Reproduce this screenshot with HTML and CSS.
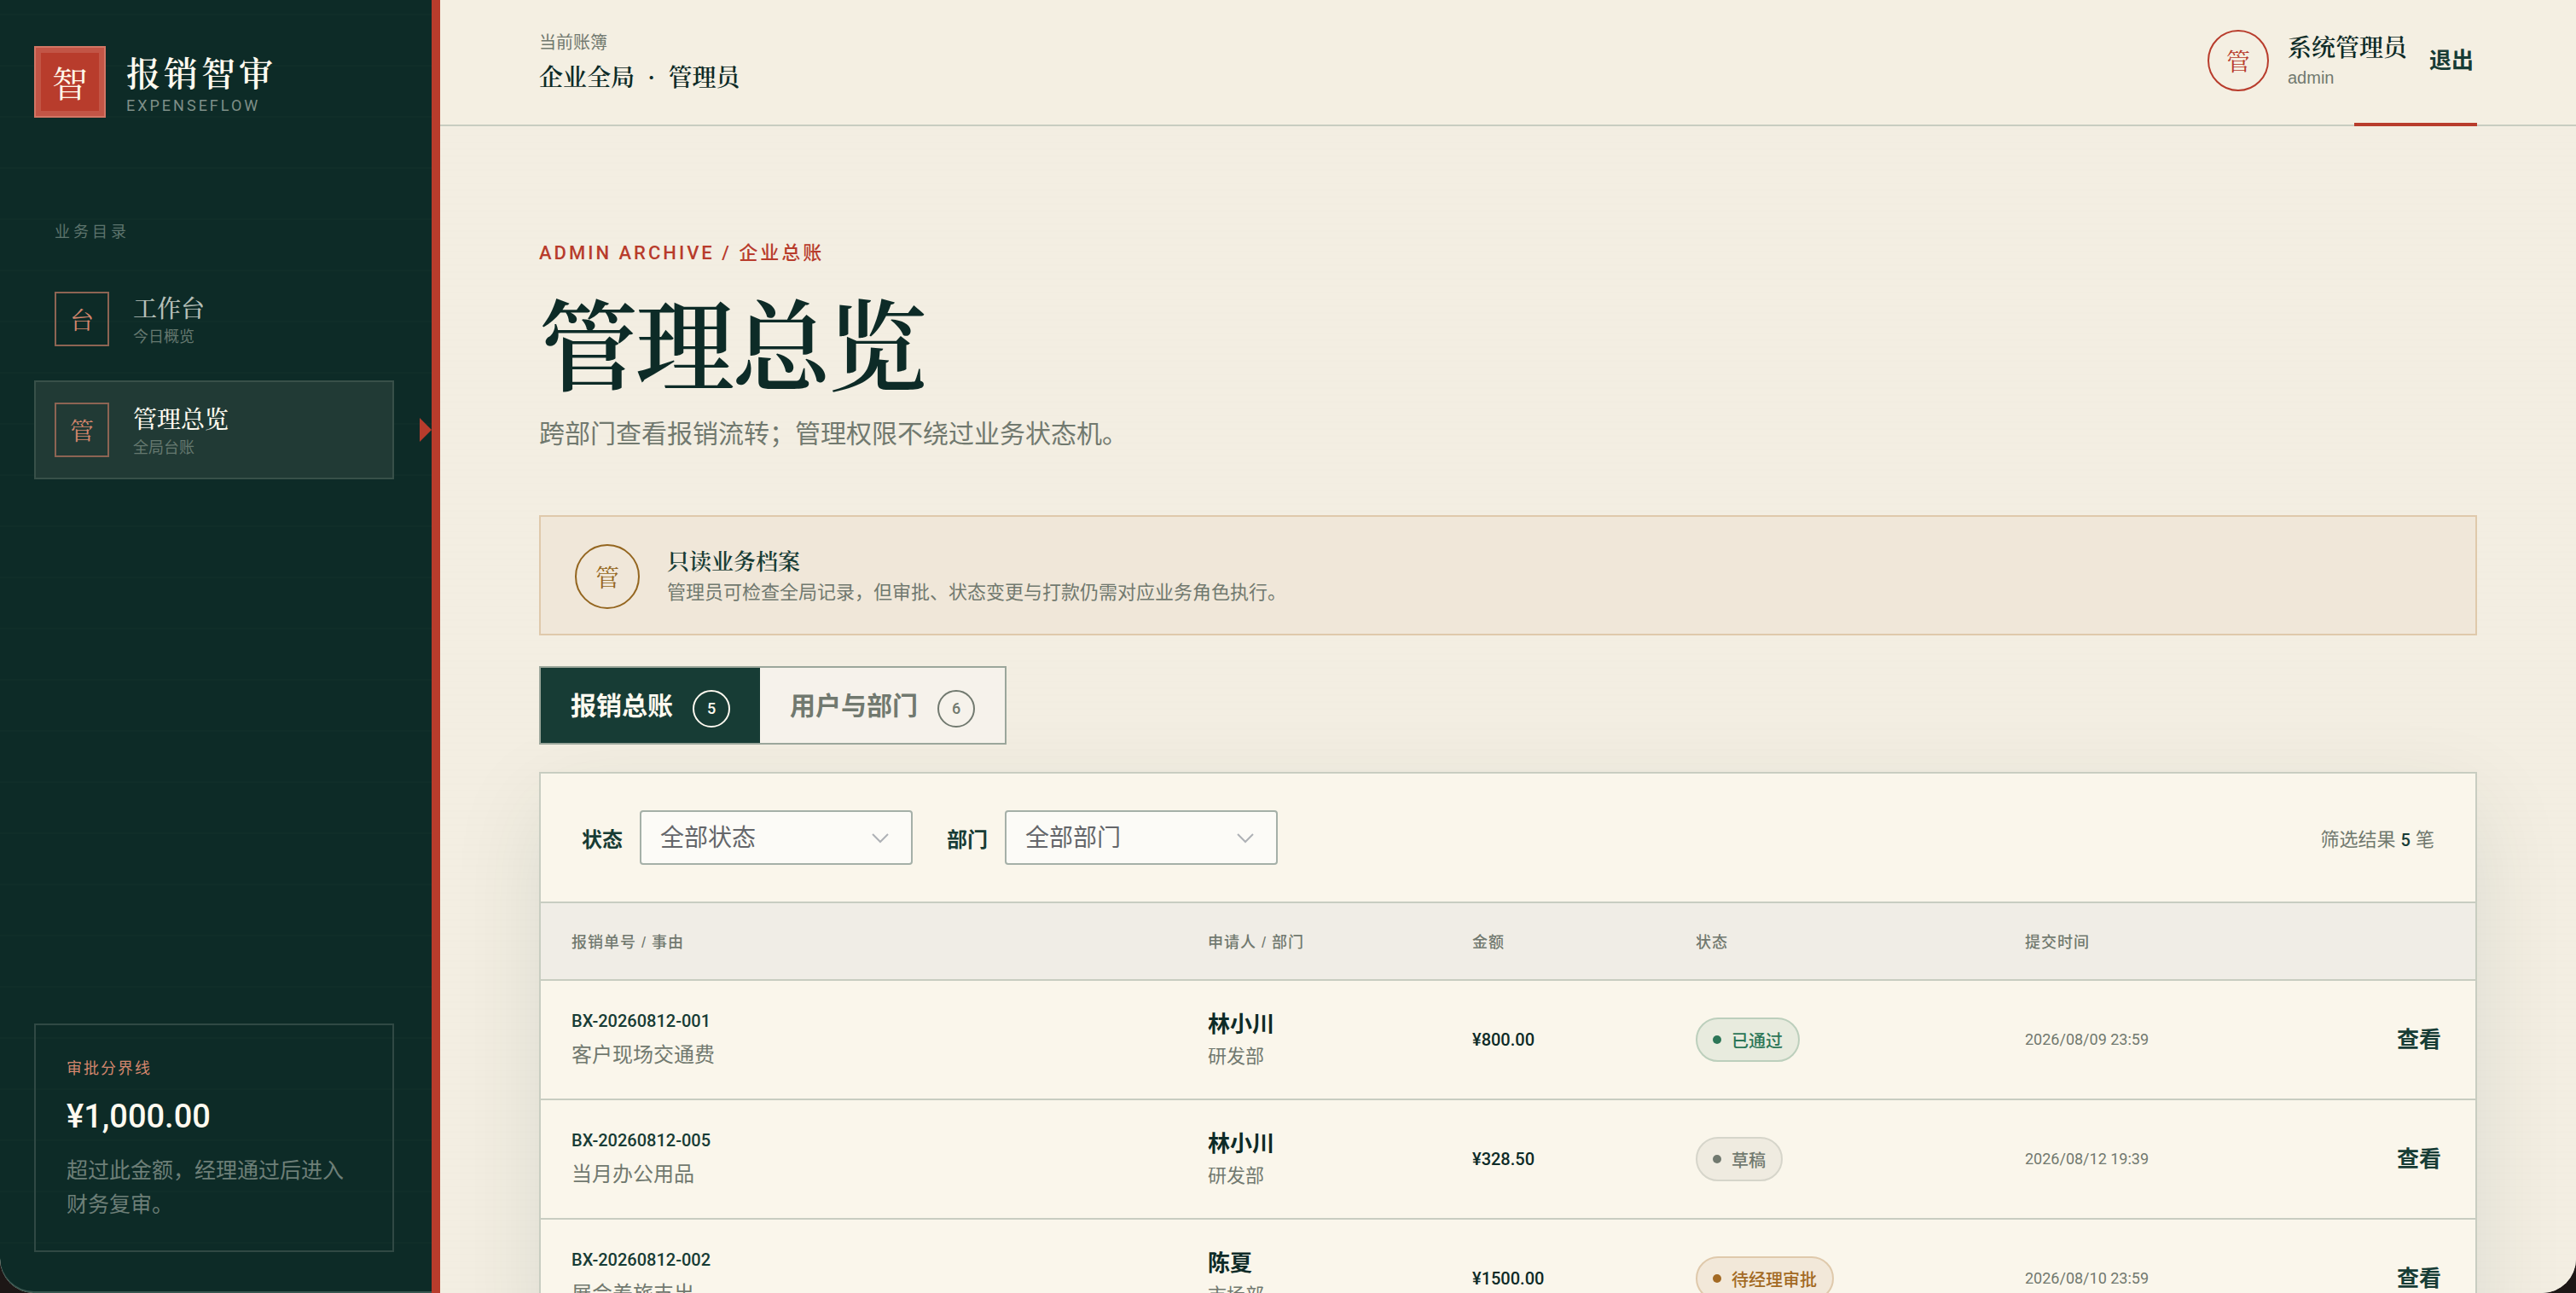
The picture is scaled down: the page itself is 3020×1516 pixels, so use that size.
FILE: index.html
```html
<!DOCTYPE html>
<html lang="zh-CN">
<head>
<meta charset="utf-8">
<meta name="viewport" content="width=device-width, initial-scale=1">
<title>报销智审 · 管理总览</title>
<link rel="stylesheet" href="styles.css">
</head>
<body>
<div class="app">
  <aside class="sidebar">
    <div class="brand">
      <span class="brand-seal">智</span>
      <div class="brand-text">
        <strong class="brand-name">报销智审</strong>
        <span class="brand-sub">EXPENSEFLOW</span>
      </div>
    </div>
    <nav class="nav" aria-label="业务目录">
      <p class="nav-title">业务目录</p>
      <a class="nav-item" href="#workbench">
        <span class="nav-icon">台</span>
        <span class="nav-text"><span class="nav-name">工作台</span><span class="nav-sub">今日概览</span></span>
      </a>
      <a class="nav-item is-active" href="#admin" aria-current="page">
        <span class="nav-icon">管</span>
        <span class="nav-text"><span class="nav-name">管理总览</span><span class="nav-sub">全局台账</span></span>
      </a>
    </nav>
    <section class="limit">
      <p class="limit-label">审批分界线</p>
      <p class="limit-amount">¥1,000.00</p>
      <p class="limit-desc">超过此金额，经理通过后进入财务复审。</p>
    </section>
  </aside>

  <div class="main">
    <header class="topbar">
      <div class="ledger">
        <span class="ledger-label">当前账簿</span>
        <strong class="ledger-name">企业全局 <span class="dot">·</span> 管理员</strong>
      </div>
      <div class="account">
        <span class="avatar">管</span>
        <div class="account-text">
          <strong class="account-name">系统管理员</strong>
          <span class="account-id">admin</span>
        </div>
        <button class="text-button" type="button">退出</button>
      </div>
    </header>

    <main class="content">
      <p class="eyebrow">ADMIN ARCHIVE / 企业总账</p>
      <h1 class="title">管理总览</h1>
      <p class="lead">跨部门查看报销流转；管理权限不绕过业务状态机。</p>

      <section class="notice">
        <span class="notice-icon">管</span>
        <div class="notice-text">
          <strong class="notice-title">只读业务档案</strong>
          <p class="notice-desc">管理员可检查全局记录，但审批、状态变更与打款仍需对应业务角色执行。</p>
        </div>
      </section>

      <div class="tabs" role="tablist">
        <button class="tab is-active" type="button" role="tab" aria-selected="true">报销总账<span class="tab-count">5</span></button>
        <button class="tab" type="button" role="tab" aria-selected="false">用户与部门<span class="tab-count">6</span></button>
      </div>

      <section class="panel">
        <div class="filters">
          <label class="filter-label" for="status">状态</label>
          <div class="select">
            <select id="status"><option>全部状态</option></select>
            <svg class="chevron" viewBox="0 0 20 12" aria-hidden="true"><path d="M1 1l9 9 9-9"/></svg>
          </div>
          <label class="filter-label" for="dept">部门</label>
          <div class="select">
            <select id="dept"><option>全部部门</option></select>
            <svg class="chevron" viewBox="0 0 20 12" aria-hidden="true"><path d="M1 1l9 9 9-9"/></svg>
          </div>
          <p class="filter-result">筛选结果 <b>5</b> 笔</p>
        </div>
        <table class="table">
          <colgroup><col><col class="col-who"><col class="col-sum"><col class="col-state"><col class="col-time"><col class="col-action"></colgroup>
          <thead>
            <tr><th>报销单号 / 事由</th><th>申请人 / 部门</th><th>金额</th><th>状态</th><th colspan="2">提交时间</th></tr>
          </thead>
          <tbody>
            <tr>
              <td><span class="bill-no">BX-20260812-001</span><span class="bill-why">客户现场交通费</span></td>
              <td><strong class="who">林小川</strong><span class="dept">研发部</span></td>
              <td class="sum">¥800.00</td>
              <td><span class="badge badge-green">已通过</span></td>
              <td class="time">2026/08/09 23:59</td>
              <td class="action"><button class="text-button" type="button">查看</button></td>
            </tr>
            <tr>
              <td><span class="bill-no">BX-20260812-005</span><span class="bill-why">当月办公用品</span></td>
              <td><strong class="who">林小川</strong><span class="dept">研发部</span></td>
              <td class="sum">¥328.50</td>
              <td><span class="badge badge-grey">草稿</span></td>
              <td class="time">2026/08/12 19:39</td>
              <td class="action"><button class="text-button" type="button">查看</button></td>
            </tr>
            <tr>
              <td><span class="bill-no">BX-20260812-002</span><span class="bill-why">展会差旅支出</span></td>
              <td><strong class="who">陈夏</strong><span class="dept">市场部</span></td>
              <td class="sum">¥1500.00</td>
              <td><span class="badge badge-amber">待经理审批</span></td>
              <td class="time">2026/08/10 23:59</td>
              <td class="action"><button class="text-button" type="button">查看</button></td>
            </tr>
          </tbody>
        </table>
      </section>
    </main>
  </div>
</div>
</body>
</html>
```

FILE: styles.css
```css
:root {
  --ink: #0d2b27;
  --green: #173c35;
  --red: #b83c2c;
  --muted: #71796f;
  --line: #c8cdc1;
  --sans: "Liberation Sans", "Noto Sans CJK SC", sans-serif;
  --serif: "Noto Serif CJK SC", "Noto Sans CJK SC", serif;
  --din: Roboto, "Noto Sans CJK SC", sans-serif;
}
* { box-sizing: border-box; margin: 0; padding: 0; }
html { background: #1d1716; }
body { font-family: var(--sans); color: var(--ink); }
button, select { font: inherit; color: inherit; background: none; border: 0; }
a { color: inherit; text-decoration: none; }

.app {
  display: flex;
  height: 100vh;
  overflow: hidden;
  border-radius: 0 0 40px 40px;
  background: #f3eee2;
}

.sidebar {
  display: flex;
  flex-direction: column;
  flex: 0 0 516px;
  padding: 54px 44px 48px 40px;
  border-right: 10px solid var(--red);
  border-bottom-left-radius: 40px;
  box-shadow: inset 0 -2px 0 #38564f;
  background: repeating-linear-gradient(#0d2b27 0 16px, #102e29 16px 18px, #0d2b27 18px 60px);
}
.brand { display: flex; align-items: center; gap: 24px; }
.brand-seal {
  display: grid;
  place-items: center;
  width: 84px;
  height: 84px;
  border: 2px solid #d27564;
  box-shadow: inset 0 0 0 6px #c25546;
  background: var(--red);
  color: #fff8ea;
  font: 42px/1 var(--serif);
}
.brand-text { display: flex; flex-direction: column; gap: 8px; padding-top: 4px; }
.brand-name { font: 600 40px/44px var(--serif); letter-spacing: 4px; color: #fffaf0; }
.brand-sub { font: 18px/20px var(--din); letter-spacing: 3px; color: #7f8f88; }
.nav { display: flex; flex-direction: column; gap: 14px; margin-top: 120px; }
.nav-title { padding: 0 24px; margin-bottom: 16px; font-size: 18px; line-height: 28px; letter-spacing: 4px; color: #5d746d; }
.nav-item {
  position: relative;
  display: flex;
  align-items: center;
  gap: 28px;
  height: 116px;
  padding: 0 22px;
  border: 2px solid transparent;
  color: #b5bfb8;
}
.nav-item.is-active { border-color: #385049; background: #213a35; color: #fffaf0; }
.nav-item.is-active::after {
  content: "";
  position: absolute;
  right: -46px;
  top: 42px;
  border: 14px solid transparent;
  border-left-color: var(--red);
  border-right: 0;
}
.nav-icon {
  display: grid;
  place-items: center;
  width: 64px;
  height: 64px;
  border: 2px solid #8d6453;
  color: #d4866d;
  font: 28px/1 var(--serif);
}
.nav-text { display: flex; flex-direction: column; padding-top: 4px; }
.nav-name { font: 500 28px/38px var(--serif); }
.nav-sub { font-size: 18px; line-height: 32px; color: #65786f; }
.limit { margin-top: auto; padding: 38px 36px 34px; border: 2px solid #304944; }
.limit-label { font-size: 18px; line-height: 26px; letter-spacing: 2px; color: #d4866d; }
.limit-amount { margin: 16px 0; font: 500 38px/54px var(--din); color: #fffaf0; }
.limit-desc { font-size: 25px; line-height: 40px; color: #6d7f78; }

.main {
  flex: 1;
  min-width: 0;
  background: repeating-linear-gradient(#f3eee2 0 6px, #f2ede1 6px 8px);
}
.topbar {
  position: relative;
  display: flex;
  align-items: center;
  justify-content: space-between;
  height: 148px;
  padding: 0 116px 4px;
  border-bottom: 2px solid var(--line);
  background: #f4efe2;
}
.topbar::after {
  content: "";
  position: absolute;
  right: 116px;
  bottom: -2px;
  width: 144px;
  height: 4px;
  background: var(--red);
}
.ledger, .account-text { display: flex; flex-direction: column; }
.ledger-label { font-size: 20px; line-height: 36px; color: var(--muted); }
.ledger-name { font: 600 28px/42px var(--serif); }
.dot { padding: 0 8px; }
.account { display: flex; align-items: center; }
.avatar {
  display: grid;
  place-items: center;
  width: 72px;
  height: 72px;
  margin-right: 22px;
  border: 2px solid var(--red);
  border-radius: 50%;
  color: var(--red);
  font: 28px/1 var(--serif);
}
.account-name { font: 600 28px/40px var(--serif); }
.account-id { font-size: 20px; line-height: 34px; color: var(--muted); }
.account .text-button { margin-left: 22px; }
.text-button { padding: 4px; font-size: 26px; line-height: 36px; font-weight: 700; color: var(--green); cursor: pointer; }

.content { padding: 132px 116px 60px; }
.eyebrow { font: 500 22px/34px var(--din); letter-spacing: 3px; color: var(--red); }
.title { margin-top: 15px; font: 600 116px/140px var(--serif); letter-spacing: -3px; }
.lead { margin-top: 18px; font-size: 30px; line-height: 44px; color: var(--muted); }
.notice {
  display: flex;
  align-items: center;
  gap: 32px;
  height: 141px;
  margin-top: 73px;
  padding: 2px 40px 0;
  border: 2px solid #dfc9ab;
  background: #f0e7d9;
}
.notice-icon {
  display: grid;
  place-items: center;
  width: 76px;
  height: 76px;
  border: 2px solid #946620;
  border-radius: 50%;
  color: #946620;
  font: 28px/1 var(--serif);
}
.notice-title { display: block; font: 600 26px/38px var(--serif); color: var(--green); }
.notice-desc { font-size: 22px; line-height: 38px; color: var(--muted); }

.tabs { display: inline-flex; margin-top: 36px; border: 2px solid #9ba69b; vertical-align: top; }
.tab {
  display: flex;
  align-items: center;
  gap: 23px;
  height: 88px;
  padding: 0 35px 4px;
  background: #f6f2eb;
  color: var(--muted);
  font-size: 30px;
  font-weight: 700;
}
.tab.is-active { background: var(--green); color: #fffaf0; }
.tab-count {
  display: grid;
  place-items: center;
  width: 44px;
  height: 44px;
  margin-top: 12px;
  border: 2px solid;
  border-radius: 50%;
  font: 500 18px/1 var(--din);
}

.panel {
  margin-top: 32px;
  border: 2px solid var(--line);
  background: #faf6eb;
  box-shadow: 0 36px 100px rgba(23, 60, 53, .1);
}
.filters { display: flex; align-items: center; padding: 43px 48px; }
.filter-label { margin-right: 20px; font-size: 24px; font-weight: 700; color: var(--green); }
.select { position: relative; width: 320px; margin-right: 40px; }
.select select {
  width: 100%;
  height: 64px;
  padding: 0 22px;
  border: 2px solid #a5b0a8;
  border-radius: 4px;
  background: #fcfbf7;
  color: #64666a;
  font-size: 28px;
  appearance: none;
}
.chevron {
  position: absolute;
  right: 28px;
  top: 27px;
  width: 20px;
  height: 12px;
  fill: none;
  stroke: #aeb1b6;
  stroke-width: 2;
  pointer-events: none;
}
.filter-result { margin-left: auto; font-size: 22px; color: var(--muted); }
.filter-result b { font: 500 20px/1 var(--din); color: var(--green); }

.table { width: 100%; border-collapse: collapse; table-layout: fixed; text-align: left; }
.col-who { width: 310px; }
.col-sum { width: 262px; }
.col-state { width: 386px; }
.col-time { width: 300px; }
.col-action { width: 264px; }
.table th {
  height: 91px;
  padding: 0 36px 2px;
  border: solid var(--line);
  border-width: 2px 0;
  background: #f0ede6;
  color: var(--muted);
  font-size: 18px;
  font-weight: 500;
  letter-spacing: 1px;
}
.table td { height: 140px; padding: 0 36px; border-bottom: 2px solid var(--line); }
.bill-no, .bill-why, .who, .dept { display: block; }
.bill-no { font: 500 20px/36px var(--din); color: var(--green); }
.bill-why { font-size: 24px; line-height: 44px; color: var(--muted); }
.who { font-size: 26px; line-height: 40px; }
.dept { font-size: 22px; line-height: 36px; color: var(--muted); }
.sum { font: 500 20px/30px var(--din); }
.time { font: 18px/30px var(--din); color: var(--muted); }
.table .action { text-align: right; }
.badge {
  display: inline-flex;
  align-items: center;
  gap: 12px;
  height: 52px;
  padding: 0 18px;
  border: 2px solid;
  border-radius: 26px;
  font-size: 20px;
  font-weight: 500;
  vertical-align: middle;
}
.badge::before { content: ""; width: 10px; height: 10px; border-radius: 50%; background: currentColor; }
.badge-green { border-color: #bccfbc; background: #e8ebde; color: #2c7657; }
.badge-grey { border-color: #d6d5ca; background: #efebe0; color: #71796f; }
.badge-amber { border-color: #dfc9ab; background: #f2e8d9; color: #a36a24; }
```
